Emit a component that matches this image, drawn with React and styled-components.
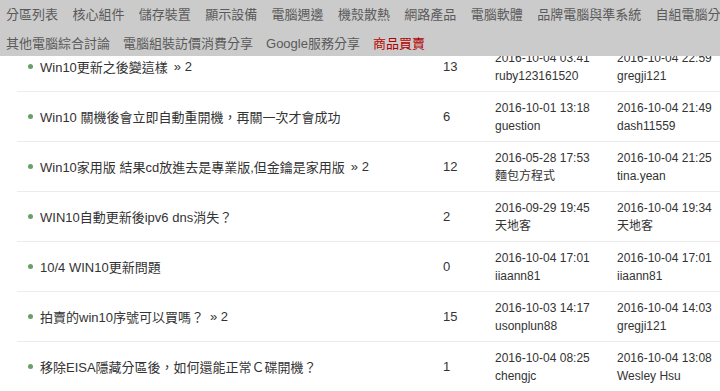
import React from "react";
import styled, { createGlobalStyle } from "styled-components";

const GlobalStyle = createGlobalStyle`
  html, body {
    margin: 0;
    padding: 0;
    background: #fff;
    font-family: "Liberation Sans", Arial, "Noto Sans CJK TC", sans-serif;
    overflow: hidden;
  }
`;

const boards = [
  ["分區列表", "核心組件", "儲存裝置", "顯示設備", "電腦週邊", "機殼散熱", "網路產品", "電腦軟體", "品牌電腦與準系統", "自組電腦分享"],
  ["其他電腦綜合討論", "電腦組裝訪價消費分享", "Google服務分享", "商品買賣"],
];

const topics = [
  { title: "Win10更新之後變這樣", pages: 2, replies: 13, created: "2016-10-04 03:41", author: "ruby123161520", last: "2016-10-04 22:59", lastUser: "gregji121" },
  { title: "Win10 關機後會立即自動重開機，再關一次才會成功", replies: 6, created: "2016-10-01 13:18", author: "guestion", last: "2016-10-04 21:49", lastUser: "dash11559" },
  { title: "Win10家用版 結果cd放進去是專業版,但金鑰是家用版", pages: 2, replies: 12, created: "2016-05-28 17:53", author: "麵包方程式", last: "2016-10-04 21:25", lastUser: "tina.yean" },
  { title: "WIN10自動更新後ipv6 dns消失？", replies: 2, created: "2016-09-29 19:45", author: "天地客", last: "2016-10-04 19:34", lastUser: "天地客" },
  { title: "10/4 WIN10更新問題", replies: 0, created: "2016-10-04 17:01", author: "iiaann81", last: "2016-10-04 17:01", lastUser: "iiaann81" },
  { title: "拍賣的win10序號可以買嗎？", pages: 2, replies: 15, created: "2016-10-03 14:17", author: "usonplun88", last: "2016-10-04 14:03", lastUser: "gregji121" },
  { title: "移除EISA隱藏分區後，如何還能正常Ｃ碟開機？", replies: 1, created: "2016-10-04 08:25", author: "chengjc", last: "2016-10-04 13:08", lastUser: "Wesley Hsu" },
];

const Header = styled.nav`
  position: fixed;
  top: 0;
  left: 0;
  right: 0;
  height: 56px;
  background: #cbcbcb;
  z-index: 2;
  display: flex;
  flex-direction: column;
  overflow: hidden;
`;

const MenuRow = styled.div`
  display: flex;
  height: 28px;
  align-items: center;
  white-space: nowrap;
  padding-top: ${(p) => (p.$second ? "1px" : "0")};
`;

const MenuLink = styled.a`
  font-size: 13px;
  color: ${(p) => (p.$hot ? "#b40000" : "#5a5a5a")};
  padding: 0 ${(p) => (p.$wide ? "7.2px" : "6.5px")};
  text-decoration: none;
  flex-shrink: 0;
  &:first-child {
    padding-left: 6px;
  }
`;

const List = styled.div`
  padding-top: 42px;
  margin-left: 17px;
`;

const Row = styled.div`
  display: grid;
  grid-template-columns: 426px 52px 122px 1fr;
  height: 49px;
  align-items: center;
  border-bottom: 1px solid #ececec;
  color: #333;
  white-space: nowrap;
`;

const Title = styled.div`
  display: flex;
  align-items: center;
  font-size: 13px;
  padding-left: 10px;
  &::before {
    content: "";
    width: 5px;
    height: 5px;
    border-radius: 50%;
    background: #68a068;
    margin-left: 1px;
    margin-right: 7px;
    flex-shrink: 0;
  }
`;

const Pages = styled.span`
  margin-left: 6px;
`;

const Count = styled.div`
  font-size: 13px;
`;

const Meta = styled.div`
  font-size: 12px;
  line-height: 18px;
  display: flex;
  flex-direction: column;
`;

export default function App() {
  return (
    <>
      <GlobalStyle />
      <Header>
        {boards.map((row, i) => (
          <MenuRow key={i} $second={i === 1}>
            {row.map((name) => (
              <MenuLink key={name} $hot={name === "商品買賣"} $wide={i === 0}>
                {name}
              </MenuLink>
            ))}
          </MenuRow>
        ))}
      </Header>
      <List>
        {topics.map((t) => (
          <Row key={t.title}>
            <Title>
              {t.title}
              {t.pages && <Pages>» {t.pages}</Pages>}
            </Title>
            <Count>{t.replies}</Count>
            <Meta>
              <span>{t.created}</span>
              <span>{t.author}</span>
            </Meta>
            <Meta>
              <span>{t.last}</span>
              <span>{t.lastUser}</span>
            </Meta>
          </Row>
        ))}
      </List>
    </>
  );
}
